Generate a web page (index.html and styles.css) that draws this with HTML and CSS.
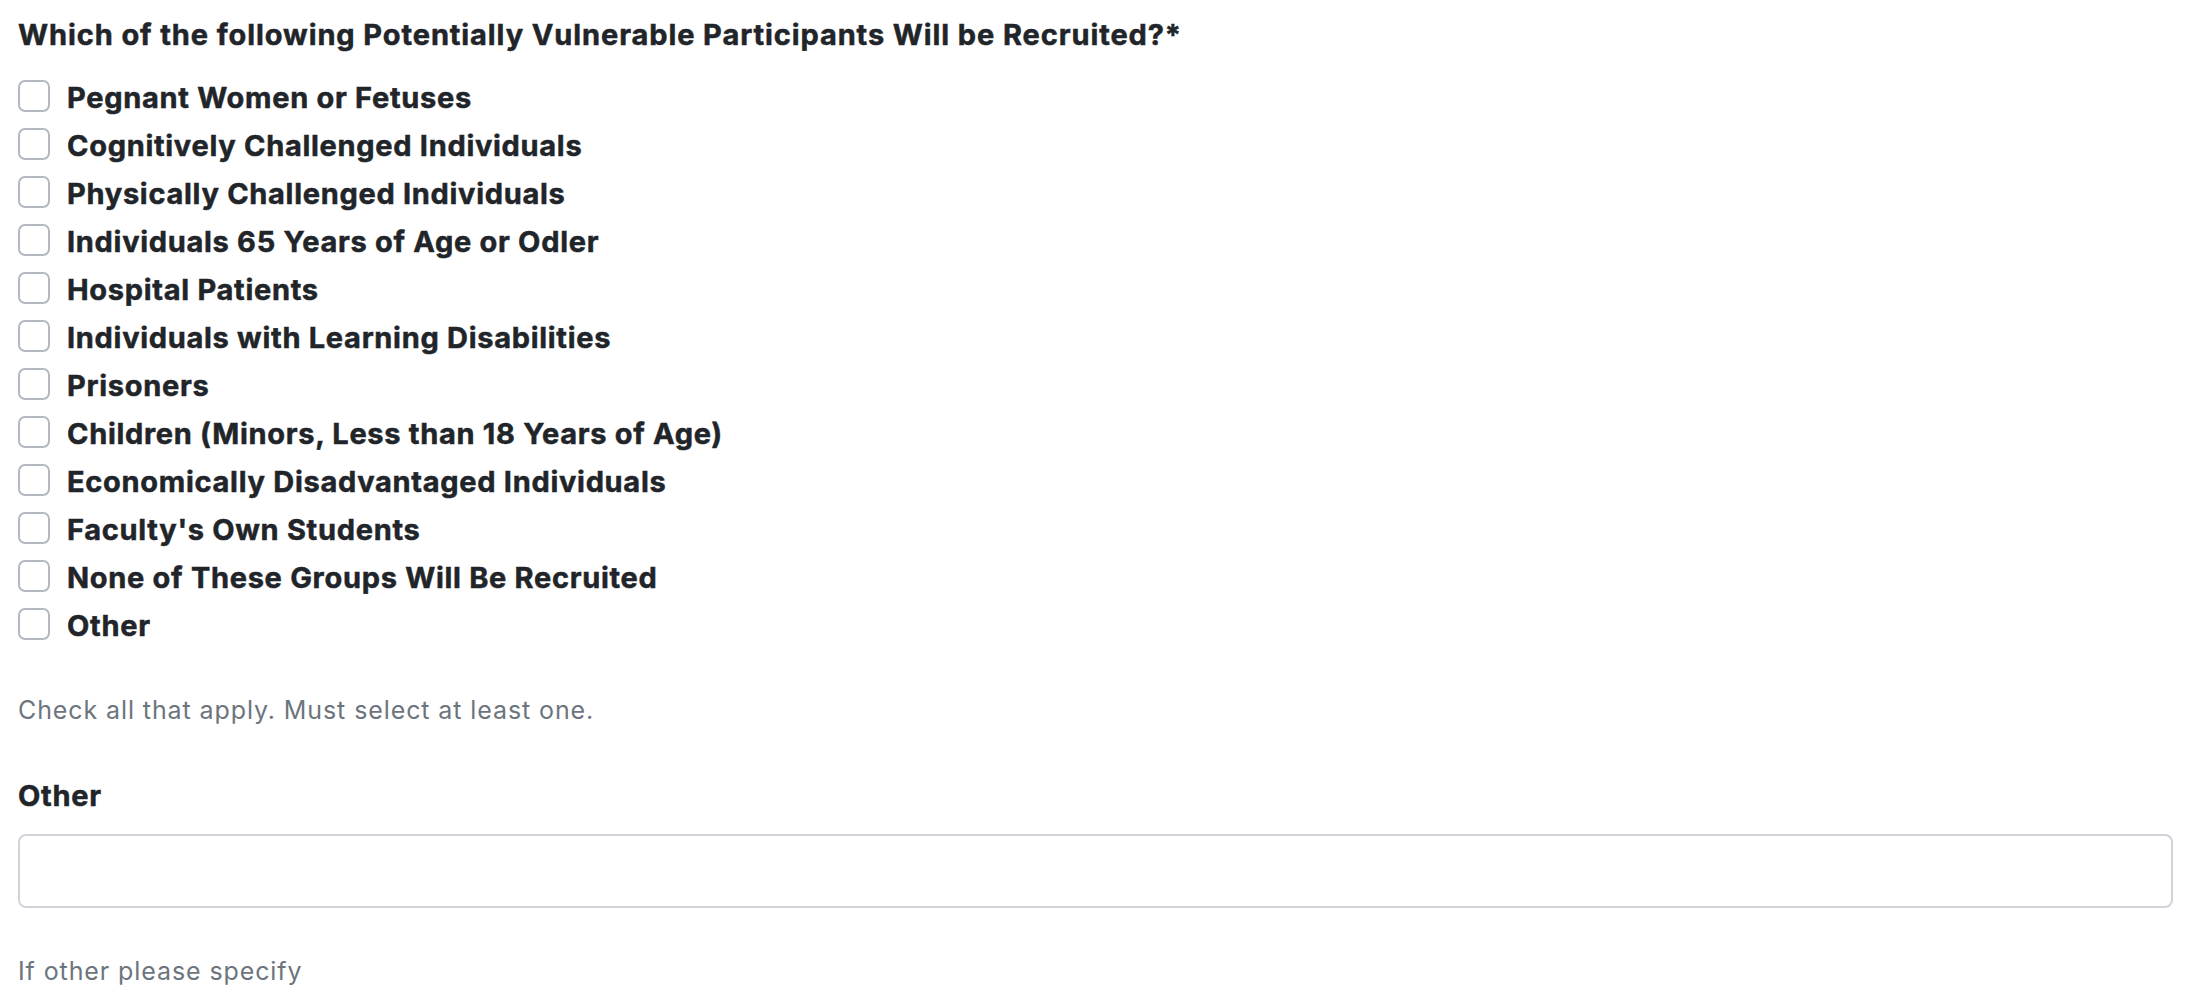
FILE: index.html
```html
<!DOCTYPE html>
<html lang="en">
<head>
<meta charset="utf-8">
<title>Vulnerable Participants</title>
<link rel="stylesheet" href="styles.css">
</head>
<body>
<form class="form">
  <fieldset class="group">
    <legend class="question">Which of the following Potentially Vulnerable Participants Will be Recruited?*</legend>
    <div class="options">
      <label class="option"><input type="checkbox" class="box"><span class="text">Pegnant Women or Fetuses</span></label>
      <label class="option"><input type="checkbox" class="box"><span class="text">Cognitively Challenged Individuals</span></label>
      <label class="option"><input type="checkbox" class="box"><span class="text">Physically Challenged Individuals</span></label>
      <label class="option"><input type="checkbox" class="box"><span class="text">Individuals 65 Years of Age or Odler</span></label>
      <label class="option"><input type="checkbox" class="box"><span class="text">Hospital Patients</span></label>
      <label class="option"><input type="checkbox" class="box"><span class="text">Individuals with Learning Disabilities</span></label>
      <label class="option"><input type="checkbox" class="box"><span class="text">Prisoners</span></label>
      <label class="option"><input type="checkbox" class="box"><span class="text">Children (Minors, Less than 18 Years of Age)</span></label>
      <label class="option"><input type="checkbox" class="box"><span class="text">Economically Disadvantaged Individuals</span></label>
      <label class="option"><input type="checkbox" class="box"><span class="text">Faculty's Own Students</span></label>
      <label class="option"><input type="checkbox" class="box"><span class="text">None of These Groups Will Be Recruited</span></label>
      <label class="option"><input type="checkbox" class="box"><span class="text">Other</span></label>
    </div>
    <p class="help help-first">Check all that apply. Must select at least one.</p>
  </fieldset>
  <div class="field">
    <label class="field-label" for="other">Other</label>
    <input id="other" class="text-input" type="text">
    <p class="help help-second">If other please specify</p>
  </div>
</form>
</body>
</html>
```

FILE: styles.css
```css
html, body {
  margin: 0;
  padding: 0;
  background: #ffffff;
}

body {
  font-family: Inter, Roboto, "Liberation Sans", sans-serif;
  color: #212529;
}

.form {
  padding: 18px 21px 0 18px;
}

.group {
  border: 0;
  margin: 0;
  padding: 0;
  min-width: 0;
}

.question {
  padding: 0;
  margin: 0 0 20px 0;
  font-size: 29px;
  line-height: 34px;
  font-weight: 700;
  letter-spacing: 0.9px;
  -webkit-text-stroke: 0.5px #212529;
  float: left;
  width: 100%;
}

.options {
  clear: both;
  display: flex;
  flex-direction: column;
}

.option {
  display: flex;
  align-items: flex-start;
  height: 48px;
  cursor: pointer;
}

.box {
  appearance: none;
  -webkit-appearance: none;
  width: 32px;
  height: 32px;
  margin: 8px 17px 0 0;
  border: 2px solid #b3b9c1;
  border-radius: 7px;
  background: #fff;
  flex: none;
}

.text {
  padding-top: 6px;
  font-size: 29px;
  line-height: 40px;
  font-weight: 700;
  letter-spacing: 0.7px;
  -webkit-text-stroke: 0.5px #212529;
}

.help {
  margin: 0;
  font-size: 25px;
  line-height: 36px;
  letter-spacing: 0.9px;
  color: #6c757d;
}

.help-first {
  margin-top: 44px;
}

.field {
  display: flex;
  flex-direction: column;
  margin-top: 51px;
}

.field-label {
  font-size: 29px;
  line-height: 34px;
  font-weight: 700;
  letter-spacing: 0.7px;
  -webkit-text-stroke: 0.5px #212529;
  margin-bottom: 21px;
}

.text-input {
  box-sizing: border-box;
  height: 74px;
  width: 100%;
  border: 2px solid #d0d4da;
  border-radius: 8px;
  margin: 0;
  padding: 0 16px;
  font: inherit;
  font-size: 28px;
}

.help-second {
  margin-top: 45px;
}
```
